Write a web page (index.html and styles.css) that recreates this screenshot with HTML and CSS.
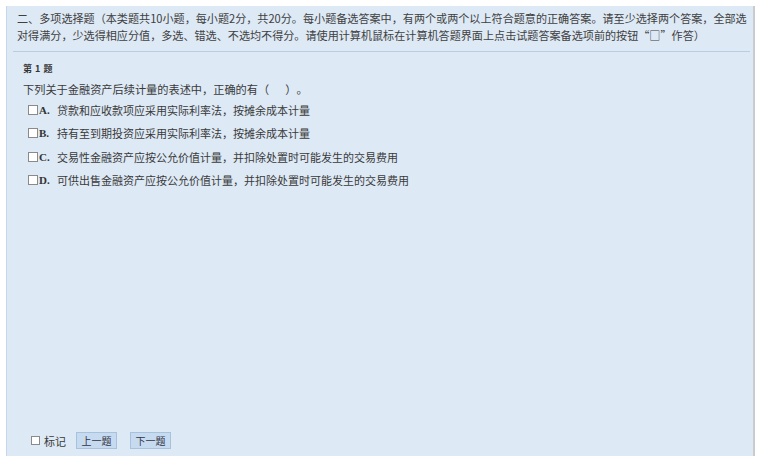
FILE: index.html
```html
<!DOCTYPE html>
<html lang="zh-CN">
<head>
<meta charset="utf-8">
<title>多项选择题</title>
<link rel="stylesheet" href="styles.css">
</head>
<body>
<div class="panel">
  <div class="intro">二、多项选择题（本类题共10小题，每小题2分，共20分。每小题备选答案中，有两个或两个以上符合题意的正确答案。请至少选择两个答案，全部选对得满分，少选得相应分值，多选、错选、不选均不得分。请使用计算机鼠标在计算机答题界面上点击试题答案备选项前的按钮“□”作答）</div>
  <div class="question">
    <div class="qno">第 1 题</div>
    <div class="stem">下列关于金融资产后续计量的表述中，正确的有（　&nbsp;&nbsp;）。</div>
    <ul class="options">
      <li class="opt"><span class="box"></span><b class="letter">A.</b><span class="otext">贷款和应收款项应采用实际利率法，按摊余成本计量</span></li>
      <li class="opt"><span class="box"></span><b class="letter">B.</b><span class="otext">持有至到期投资应采用实际利率法，按摊余成本计量</span></li>
      <li class="opt"><span class="box"></span><b class="letter">C.</b><span class="otext">交易性金融资产应按公允价值计量，并扣除处置时可能发生的交易费用</span></li>
      <li class="opt"><span class="box"></span><b class="letter">D.</b><span class="otext">可供出售金融资产应按公允价值计量，并扣除处置时可能发生的交易费用</span></li>
    </ul>
  </div>
  <div class="footer">
    <span class="box mark-box"></span><span class="mark">标记</span>
    <button class="btn">上一题</button>
    <button class="btn">下一题</button>
  </div>
</div>
</body>
</html>
```

FILE: styles.css
```css
html, body {
  margin: 0;
  padding: 0;
  background: #ffffff;
}
body {
  font-family: "Noto Sans CJK SC", "Liberation Sans", sans-serif;
  color: #3a3a3a;
  text-spacing-trim: space-all;
}
.panel {
  margin: 6px 6px 0 6px;
  height: 450px;
  box-sizing: border-box;
  background: #dde9f5;
  border-left: 1px solid #c4d7eb;
  border-right: 2px solid #c9cbcd;
  display: flex;
  flex-direction: column;
}
.intro {
  margin: 0 3px 0 6px;
  padding: 4px 0 7px 4px;
  font-size: 11.1px;
  line-height: 17px;
  color: #404040;
  border-bottom: 1px solid #b9cde2;
}
.question {
  padding: 8px 0 0 16px;
}
.qno {
  font-size: 9px;
  font-weight: bold;
  line-height: 17px;
  color: #333;
  word-spacing: 1px;
}
.stem {
  margin-top: 4px;
  font-size: 11.2px;
  line-height: 17px;
}
.options {
  list-style: none;
  margin: 0;
  padding: 0 0 0 5px;
}
.opt {
  display: flex;
  align-items: center;
  height: 23.5px;
  font-size: 11px;
}
.box {
  display: inline-block;
  width: 8px;
  height: 8px;
  border: 1px solid #8a8a8a;
  background: #ffffff;
  box-sizing: content-box;
}
.letter {
  font-family: "Liberation Serif", serif;
  font-size: 11px;
  margin-left: 1px;
  width: 18px;
  color: #333;
}
.otext {
  white-space: nowrap;
}
.footer {
  margin-top: auto;
  display: flex;
  align-items: center;
  padding: 0 0 7px 24px;
  font-size: 11px;
}
.mark-box {
  width: 7px;
  height: 7px;
}
.mark {
  margin-left: 4px;
  margin-right: 10px;
}
.btn {
  font-family: inherit;
  font-size: 10px;
  color: #334;
  height: 17px;
  width: 41px;
  padding: 0;
  margin-right: 13px;
  background: #c7dbf0;
  border: 1px solid #a8c2de;
  border-radius: 0;
  line-height: 15px;
}
```
